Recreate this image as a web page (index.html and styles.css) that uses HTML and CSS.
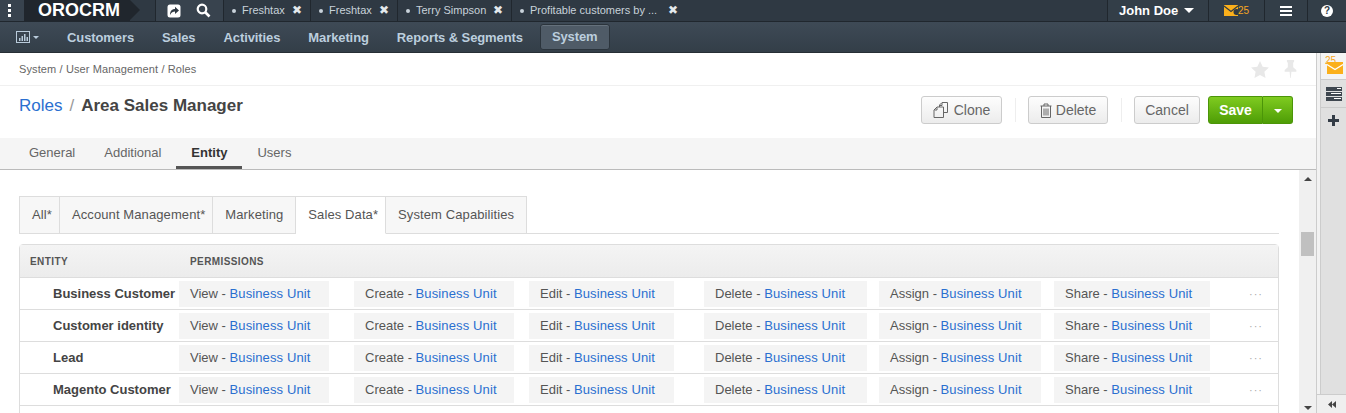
FILE: index.html
```html
<!DOCTYPE html>
<html lang="en">

<head>
    <meta charset="UTF-8">
    <meta name="viewport" content="width=device-width, initial-scale=1.0">
    <title>Roles - Area Sales Manager</title>
    <link rel="stylesheet" href="styles.css">
</head>

<body>

    <header class="topbar">
        <div class="dots"><i></i><i></i><i></i></div>
        <div class="logo">OROCRM</div>
        <div class="logo-arrow"></div>
        <div class="quick">
            <svg width="14" height="14" viewBox="0 0 14 14"><rect x="0.5" y="0.5" width="13" height="13" rx="2.5" fill="#fff"/><path d="M3 11c0-4 2-6 5-6V2.800l4 3.600-4 3.600V7.600c-2 0-3.500 1-5 3.400z" fill="#2f3943"/></svg>
            <svg width="15" height="15" viewBox="0 0 15 15"><circle cx="6" cy="6" r="4.300" fill="none" stroke="#fff" stroke-width="2.200"/><path d="M9 9l4.500 4.500" stroke="#fff" stroke-width="2.600"/></svg>
        </div>
        <div class="pin-tab tab-a"><b></b>Freshtax<span class="close">✖</span></div>
        <div class="pin-tab tab-a"><b></b>Freshtax<span class="close">✖</span></div>
        <div class="pin-tab tab-b"><b></b>Terry Simpson<span class="close">✖</span></div>
        <div class="pin-tab tab-c"><b></b>Profitable customers by ...<span class="close">✖</span></div>
        <div class="user">John Doe<span class="caret"></span></div>
        <div class="top-icon mail">
            <svg width="14" height="11" viewBox="0 0 14 11"><rect width="14" height="11" fill="#fbb01b"/><path d="M0 1l7 5.500L14 1" fill="none" stroke="#2f3943" stroke-width="1.200"/><circle cx="12.500" cy="7" r="3" fill="#2f3943"/></svg>
            <span>25</span>
        </div>
        <div class="top-icon burger"><i></i><i></i><i></i></div>
        <div class="top-icon help"><span>?</span></div>
    </header>

    <nav class="menu">
        <svg class="chart" width="14" height="12" viewBox="0 0 14 12"><rect x="0.500" y="0.500" width="13" height="11" fill="none" stroke="#b9cbdb"/><path d="M3 10V7h1.500v3zM5.500 10V5H7v5zM8 10V3h1.500v7zM10.500 10V6H12v4z" fill="#b9cbdb"/></svg>
        <span class="menu-caret"></span>
        <a class="menu-item first">Customers</a>
        <a class="menu-item">Sales</a>
        <a class="menu-item">Activities</a>
        <a class="menu-item">Marketing</a>
        <a class="menu-item">Reports &amp; Segments</a>
        <a class="menu-item active">System</a>
    </nav>

    <div class="layout">
        <main class="page">
            <div class="crumbs">
                <span>System / User Management / Roles</span>
                <span class="crumb-icons">
                    <svg width="18" height="17" viewBox="0 0 20 19"><path d="M10 0l3 6.300 7 .9-5.100 4.800 1.300 6.900L10 15.600l-6.200 3.300L5.100 12 0 7.200l7-.9z" fill="#e8e8e8"/></svg>
                    <svg width="13" height="18" viewBox="0 0 14 20"><path d="M3 0h8v2L10 3v5l3.500 3v2H8l-.7 7h-.6L6 13H.5v-2L4 8V3L3 2z" fill="#e8e8e8"/></svg>
                </span>
            </div>

            <div class="title-row">
                <h1><a>Roles</a><span class="slash">/</span><strong>Area Sales Manager</strong></h1>
                <div class="actions">
                    <button class="btn clone">
                        <svg width="17" height="16" viewBox="0 0 17 16"><path d="M6.500 5V3L9 .5h5.500v10H11M1 8l3-3h6.500v10.500H1zM4 5.500V8H1.500M9 1v2.500H6.500" fill="none" stroke="#666"/></svg>
                        Clone
                    </button>
                    <span class="sep"></span>
                    <button class="btn delete">
                        <svg width="12" height="15" viewBox="0 0 12 15"><path d="M.500 3h11M4 3V1h4v2M1.500 3v11.500h9V3M4 5.500v7M6 5.500v7M8 5.500v7" fill="none" stroke="#666"/></svg>
                        Delete
                    </button>
                    <span class="sep"></span>
                    <button class="btn cancel">Cancel</button>
                    <div class="save-group">
                        <button class="save">Save</button>
                        <button class="save-caret"><span></span></button>
                    </div>
                </div>
            </div>

            <div class="tabs">
                <a class="tab">General</a>
                <a class="tab">Additional</a>
                <a class="tab active">Entity</a>
                <a class="tab">Users</a>
            </div>

            <div class="scroller">
                <div class="content">
                    <div class="subtabs">
                        <a class="subtab changed first">All*</a>
                        <a class="subtab changed">Account Management*</a>
                        <a class="subtab">Marketing</a>
                        <a class="subtab changed active">Sales Data*</a>
                        <a class="subtab">System Capabilities</a>
                    </div>

                    <div class="grid">
                        <div class="grid-head">
                            <span class="col-entity">ENTITY</span>
                            <span>PERMISSIONS</span>
                        </div>
                    </div>
                </div>
                <div class="scrollbar">
                    <span class="arrow up"></span>
                    <span class="thumb"></span>
                    <span class="arrow down"></span>
                </div>
            </div>
        </main>

        <aside class="rail">
            <div class="rail-inner">
                <div class="rail-tile mail-tile">
                    <span>25</span>
                    <svg width="16" height="12" viewBox="0 0 16 12"><rect width="16" height="12" fill="#fbb01b"/><path d="M0 2.500l8 5 8-5" fill="none" stroke="#fff" stroke-width="1.300"/></svg>
                </div>
                <div class="rail-tile">
                    <svg width="16" height="14" viewBox="0 0 16 14"><path d="M0 0h16v4H0zM0 5h16v4H0zM0 10h16v4H0z" fill="#3f4750"/><path d="M11 1.500h4M5 6.500h10M8 11.500h7" stroke="#fff"/></svg>
                </div>
                <div class="rail-tile plus">
                    <svg width="11" height="11" viewBox="0 0 11 11"><path d="M4 0h3v4h4v3H7v4H4V7H0V4h4z" fill="#333c46"/></svg>
                </div>
            </div>
            <div class="rail-toggle">
                <svg width="8" height="7" viewBox="0 0 8 7"><path d="M4 0v7L0 3.500zM8 0v7L4 3.500z" fill="#444"/></svg>
            </div>
        </aside>
    </div>

    <script>
        const entities = ["Business Customer", "Customer identity", "Lead", "Magento Customer"];
        const perms = ["View", "Create", "Edit", "Delete", "Assign", "Share"];
        const grid = document.querySelector(".grid");

        entities.forEach(function (name) {
            const row = document.createElement("div");
            row.className = "grid-row";

            const label = document.createElement("div");
            label.className = "entity-name";
            label.innerText = name;
            row.appendChild(label);

            perms.forEach(function (perm) {
                const cell = document.createElement("div");
                const box = document.createElement("div");
                box.className = "perm perm-" + perm.toLowerCase();
                box.innerHTML = perm + " - <a>Business Unit</a>";
                cell.appendChild(box);
                row.appendChild(cell);
            });

            const more = document.createElement("div");
            more.className = "more";
            more.innerText = "···";
            row.appendChild(more);

            grid.appendChild(row);
        });
    </script>
</body>

</html>
```

FILE: styles.css
```css
* {
    margin: 0;
    padding: 0;
    box-sizing: border-box;
}

html,
body {
    height: 413px;
    overflow: hidden;
}

body {
    font-family: "Liberation Sans", Arial, sans-serif;
    font-size: 13px;
    color: #444;
    background-color: #fff;
}

a {
    color: #2a6fd0;
}

/* top bar */
.topbar {
    display: flex;
    align-items: stretch;
    height: 22px;
    background-color: #2f3943;
    border-bottom: 1px solid #20272e;
    color: #c8d2da;
}

.dots {
    width: 24px;
    display: flex;
    flex-direction: column;
    align-items: center;
    justify-content: center;
    gap: 2px;
    padding-right: 13px;
    padding-left: 8px;
    background-color: #38434e;
}

.dots i {
    width: 3px;
    height: 3px;
    background-color: #fff;
}

.logo {
    width: 106px;
    padding-left: 14px;
    background-color: #20262d;
    color: #fff;
    font-size: 18px;
    font-weight: bold;
    line-height: 21px;
}

.logo-arrow {
    width: 0;
    height: 0;
    border-top: 10.5px solid transparent;
    border-bottom: 10.5px solid transparent;
    border-left: 10px solid #20262d;
}

.quick {
    width: 69px;
    margin-left: 15px;
    display: flex;
    align-items: center;
    gap: 15px;
    padding-left: 11px;
    border-left: 1px solid #20272e;
    border-right: 1px solid #20272e;
    background-color: #38434e;
}

.pin-tab {
    display: flex;
    align-items: center;
    font-size: 11px;
    padding-left: 8px;
    border-right: 1px solid #20272e;
    line-height: 21px;
}

.pin-tab b {
    width: 4px;
    height: 4px;
    border-radius: 50%;
    background-color: #c8d2da;
    margin-right: 6px;
}

.tab-a {
    width: 87px;
}

.tab-b {
    width: 114px;
}

.tab-c {
    width: 176px;
    border-right: none;
}

.close {
    margin-left: auto;
    margin-right: 8px;
    font-size: 12px;
    color: #e4e9ed;
}

.tab-c .close {
    margin-right: 10px;
}

.user {
    margin-left: auto;
    width: 101px;
    padding-left: 11px;
    border-left: 1px solid #20272e;
    color: #fff;
    font-size: 13px;
    font-weight: bold;
    display: flex;
    align-items: center;
    background-color: #333e48;
}

.caret {
    margin-left: 6px;
    border-top: 5px solid #fff;
    border-left: 5px solid transparent;
    border-right: 5px solid transparent;
}

.top-icon {
    display: flex;
    align-items: center;
    justify-content: center;
    background-color: #333e48;
}

.mail {
    width: 56px;
    border-left: 1px solid #20272e;
    font-size: 10px;
    color: #f5a623;
}

.burger {
    width: 43px;
    flex-direction: column;
    gap: 2px;
    border-left: 1px solid #20272e;
}

.burger i {
    width: 12px;
    height: 2px;
    background-color: #fff;
}

.help {
    width: 39px;
    border-left: 1px solid #20272e;
}

.help span {
    width: 12px;
    height: 12px;
    border-radius: 50%;
    background-color: #fff;
    color: #2f3943;
    font-size: 10px;
    font-weight: bold;
    line-height: 12px;
    text-align: center;
}

/* main menu */
.menu {
    display: flex;
    align-items: center;
    height: 31px;
    padding-left: 16px;
    background: linear-gradient(#3e4a56, #333e48);
    border-bottom: 1px solid #262e35;
}

.menu-caret {
    margin-left: 3px;
    margin-right: 11px;
    border-top: 3px solid #b9cbdb;
    border-left: 3.500px solid transparent;
    border-right: 3.500px solid transparent;
}

.menu-item {
    padding: 4px 14px;
    color: #bccede;
    font-size: 13px;
    font-weight: bold;
    letter-spacing: -0.1px;
    line-height: 17px;
}

.menu-item.first {
    margin-left: 3px;
}

.menu-item.active {
    margin-left: 3px;
    padding: 3px 11px;
    line-height: 18px;
    background-color: #4f5b67;
    border: 1px solid #2b343c;
    border-radius: 3px;
    box-shadow: inset 0 1px 0 #65717c;
}

/* page */
.layout {
    display: flex;
    height: 360px;
}

.page {
    flex: 1;
    min-width: 0;
    display: flex;
    flex-direction: column;
}

.crumbs {
    display: flex;
    align-items: center;
    justify-content: space-between;
    height: 33px;
    padding: 0 19px 0 19px;
    font-size: 11px;
    letter-spacing: 0.12px;
    color: #666;
    border-bottom: 1px solid #f0f0f0;
}

.crumb-icons {
    display: flex;
    align-items: center;
    gap: 15px;
}

.title-row {
    display: flex;
    justify-content: space-between;
    height: 52px;
    padding: 10px 23px 0 19px;
}

h1 {
    font-size: 17px;
    font-weight: normal;
    line-height: 20px;
}

h1 strong {
    color: #444;
}

.slash {
    margin: 0 7px;
    color: #999;
}

.actions {
    display: flex;
    align-items: flex-start;
}

.btn {
    display: flex;
    align-items: center;
    justify-content: center;
    gap: 4px;
    height: 28px;
    font-family: inherit;
    font-size: 14px;
    color: #666;
    background: linear-gradient(#fdfdfd, #ececec);
    border: 1px solid #ccc;
    border-radius: 3px;
}

.clone {
    width: 81px;
}

.delete {
    width: 80px;
}

.cancel {
    width: 66px;
}

.sep {
    width: 1px;
    height: 24px;
    margin: 2px 12px 0 13px;
    background-color: #eee;
}

.save-group {
    display: flex;
    margin-left: 8px;
    height: 28px;
}

.save,
.save-caret {
    background: linear-gradient(#7fcb20, #4e9d06);
    border: 1px solid #4b9508;
    color: #fff;
}

.save {
    width: 55px;
    font-family: inherit;
    font-size: 14px;
    font-weight: bold;
    border-radius: 3px 0 0 3px;
}

.save-caret {
    width: 30px;
    border-left: none;
    border-radius: 0 3px 3px 0;
}

.save-caret span {
    display: inline-block;
    vertical-align: middle;
    border-top: 4px solid #fff;
    border-left: 4px solid transparent;
    border-right: 4px solid transparent;
}

.tabs {
    display: flex;
    height: 32px;
    padding-left: 15px;
    background-color: #f5f5f5;
    border-bottom: 1px solid #bbb;
}

.tab {
    padding: 0 14px;
    margin-right: 1px;
    color: #666;
    font-size: 13px;
    line-height: 30px;
}

.tab.active {
    padding: 0 15px;
    color: #333;
    font-weight: bold;
    height: 31px;
    border-bottom: 3px solid #555;
}

.scroller {
    flex: 1;
    min-height: 0;
    display: flex;
    overflow: hidden;
}

.content {
    flex: 1;
    min-width: 0;
    padding: 26px 20px 0 19px;
}

.subtabs {
    display: flex;
    height: 38px;
    border-bottom: 1px solid #ddd;
}

.subtab {
    height: 38px;
    padding: 0 12px;
    color: #555;
    font-size: 13px;
    letter-spacing: 0.1px;
    line-height: 36px;
    background-color: #f7f7f7;
    border: 1px solid #ddd;
    border-left: none;
}

.subtab.first {
    border-left: 1px solid #ddd;
}

.subtab.changed {
    padding-right: 7px;
}

.subtab.active {
    background-color: #fff;
    border-bottom-color: #fff;
}

.grid {
    margin-top: 10px;
    padding-bottom: 30px;
    border: 1px solid #ddd;
    border-radius: 4px 4px 0 0;
}

.grid-head {
    display: flex;
    height: 33px;
    align-items: center;
    padding: 1px 0 0 10px;
    font-size: 10px;
    font-weight: bold;
    letter-spacing: 0.4px;
    color: #555;
    background: linear-gradient(#f4f4f4, #ececec);
    border-bottom: 1px solid #ddd;
}

.col-entity {
    width: 160px;
}

.grid-row {
    display: grid;
    grid-template-columns: 159px repeat(6, 175px) auto;
    align-items: center;
    height: 32px;
    border-bottom: 1px solid #ddd;
}

.entity-name {
    padding-left: 33px;
    font-weight: bold;
    white-space: nowrap;
    color: #444;
}

.perm {
    height: 26px;
    padding-left: 11px;
    line-height: 25px;
    color: #555;
    background-color: #f4f4f4;
}

.perm a {
    letter-spacing: 0.12px;
}

.perm-view {
    width: 150px;
}

.perm-create {
    width: 160px;
}

.perm-edit {
    width: 145px;
}

.perm-delete {
    width: 163px;
}

.perm-assign {
    width: 162px;
}

.perm-share {
    width: 156px;
}

.more {
    padding-left: 20px;
    font-size: 11px;
    letter-spacing: 1px;
    color: #aaa;
}

.scrollbar {
    width: 17px;
    flex-shrink: 0;
    display: flex;
    flex-direction: column;
    align-items: center;
    background-color: #f0f0f0;
    padding-top: 7px;
}

.arrow {
    border-left: 4px solid transparent;
    border-right: 4px solid transparent;
}

.arrow.up {
    border-bottom: 4px solid #444;
}

.arrow.down {
    margin-top: 150px;
    border-top: 4px solid #444;
}

.thumb {
    width: 13px;
    height: 24px;
    margin-top: 51px;
    background-color: #c0c0c0;
}

/* right rail */
.rail {
    width: 30px;
    flex-shrink: 0;
    display: flex;
    flex-direction: column;
    border-left: 1px solid #ccc;
    background-color: #f2f2f2;
}

.rail-inner {
    flex: 1;
    margin-left: 3px;
    background-color: #e0e0e0;
    border-left: 1px solid #ccc;
}

.rail-tile {
    height: 28px;
    display: flex;
    align-items: center;
    justify-content: center;
    border-bottom: 1px solid #ccc;
}

.mail-tile {
    height: 27px;
    flex-direction: column;
    align-items: flex-end;
    justify-content: flex-start;
    padding: 4px 3px 0 0;
    background-color: #f4f4f4;
    font-size: 10px;
    line-height: 8px;
    color: #f5a623;
}

.mail-tile span {
    align-self: flex-start;
    margin-left: 4px;
}

.mail-tile svg {
    margin-top: -3px;
}

.plus {
    border-bottom: none;
    align-items: flex-start;
    padding-top: 7px;
}

.rail-toggle {
    height: 19px;
    display: flex;
    align-items: center;
    justify-content: center;
    background-color: #efefef;
    border-top: 1px solid #ccc;
}
```
